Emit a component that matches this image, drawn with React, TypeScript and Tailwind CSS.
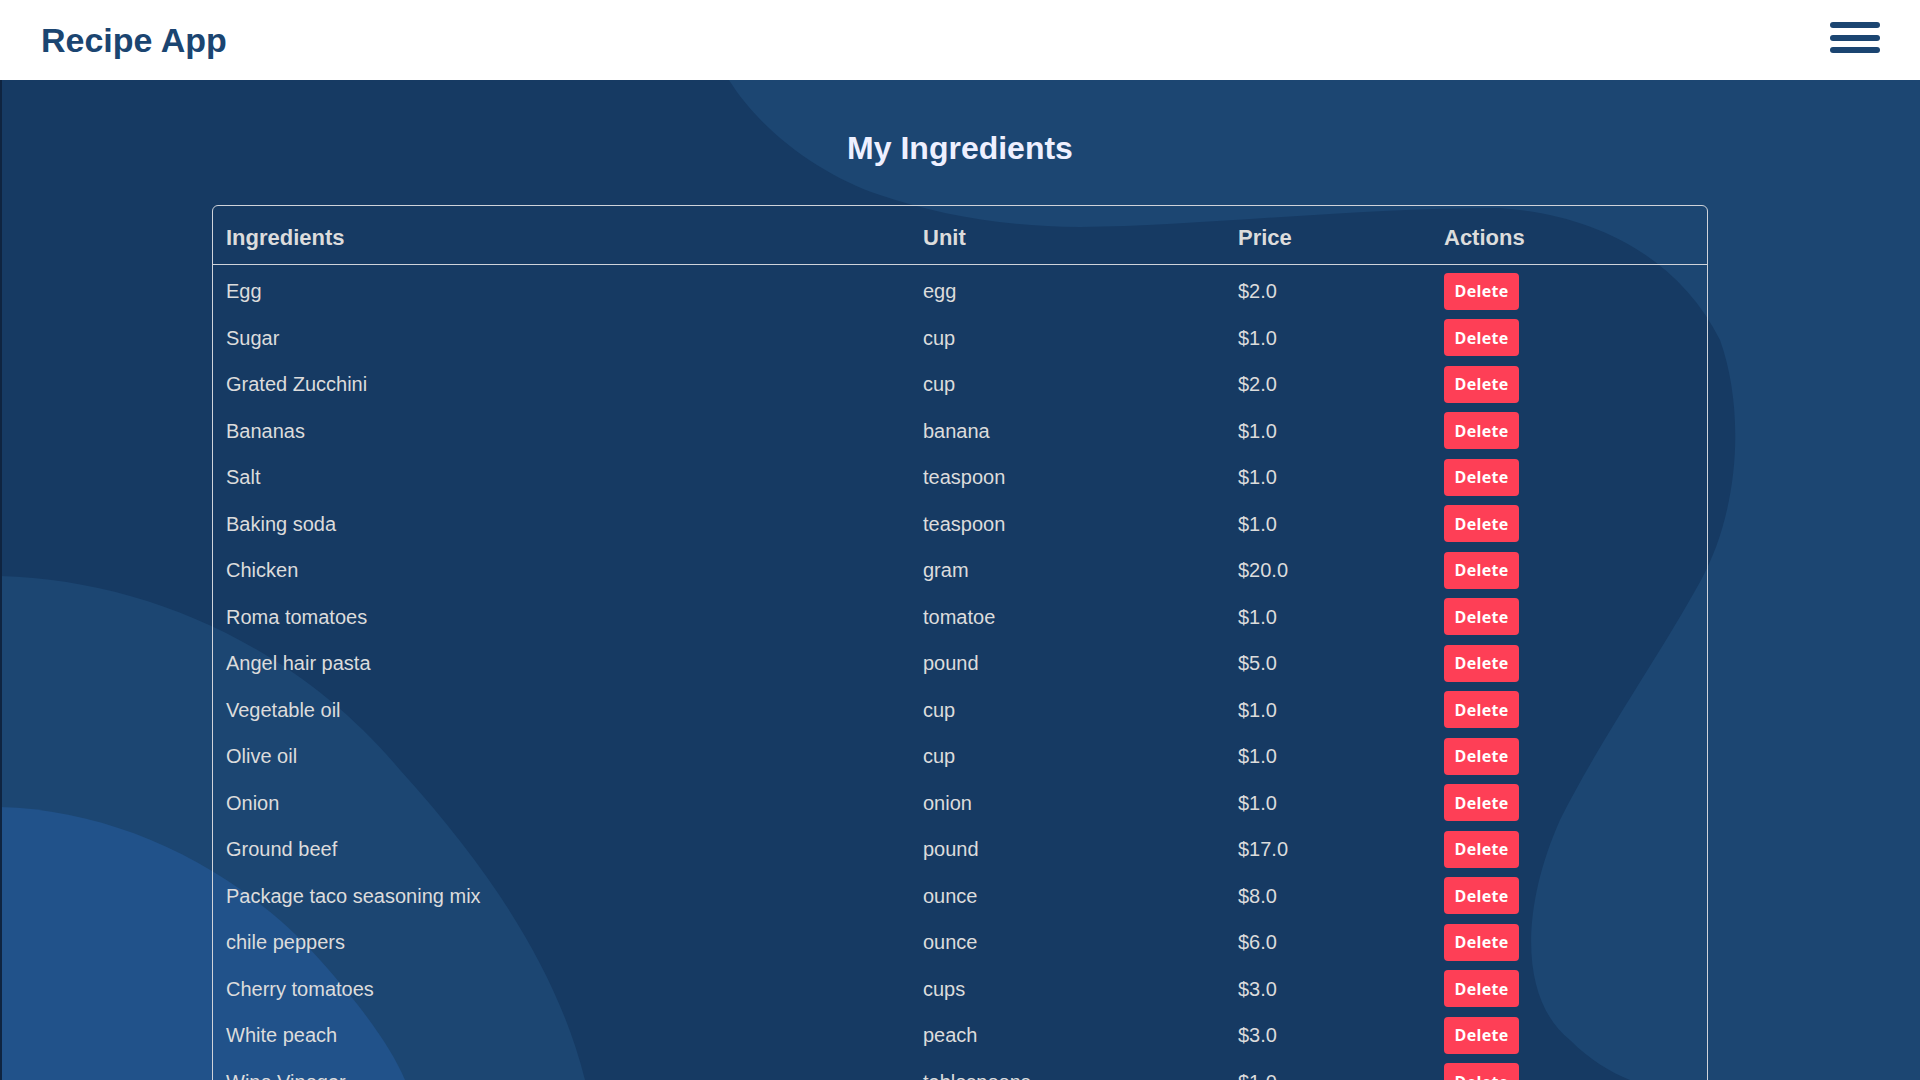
type Ingredient = {
  name: string;
  unit: string;
  price: string;
};

const ingredients: Ingredient[] = [
  { name: 'Egg', unit: 'egg', price: '$2.0' },
  { name: 'Sugar', unit: 'cup', price: '$1.0' },
  { name: 'Grated Zucchini', unit: 'cup', price: '$2.0' },
  { name: 'Bananas', unit: 'banana', price: '$1.0' },
  { name: 'Salt', unit: 'teaspoon', price: '$1.0' },
  { name: 'Baking soda', unit: 'teaspoon', price: '$1.0' },
  { name: 'Chicken', unit: 'gram', price: '$20.0' },
  { name: 'Roma tomatoes', unit: 'tomatoe', price: '$1.0' },
  { name: 'Angel hair pasta', unit: 'pound', price: '$5.0' },
  { name: 'Vegetable oil', unit: 'cup', price: '$1.0' },
  { name: 'Olive oil', unit: 'cup', price: '$1.0' },
  { name: 'Onion', unit: 'onion', price: '$1.0' },
  { name: 'Ground beef', unit: 'pound', price: '$17.0' },
  { name: 'Package taco seasoning mix', unit: 'ounce', price: '$8.0' },
  { name: 'chile peppers', unit: 'ounce', price: '$6.0' },
  { name: 'Cherry tomatoes', unit: 'cups', price: '$3.0' },
  { name: 'White peach', unit: 'peach', price: '$3.0' },
  { name: 'Wine Vinegar', unit: 'tablespoons', price: '$1.0' },
];

function Navbar() {
  return (
    <header className="flex h-[80px] items-center justify-between bg-white pl-[41px] pr-[40px]">
      <h1 className="text-[34px] font-bold leading-none text-[#1b4571]">Recipe App</h1>
      <button className="mb-[5px] flex flex-col gap-[6.5px]" aria-label="menu">
        <span className="block h-[6px] w-[50px] rounded-full bg-[#1b4571]" />
        <span className="block h-[6px] w-[50px] rounded-full bg-[#1b4571]" />
        <span className="block h-[6px] w-[50px] rounded-full bg-[#1b4571]" />
      </button>
    </header>
  );
}

function Waves() {
  return (
    <svg
      className="absolute left-0 top-0 h-[1000px] w-full"
      viewBox="0 0 1920 1000"
      preserveAspectRatio="none"
    >
      <path
        fill="#1c4672"
        d="M729,0 C760,50 820,95 880,115 C940,135 1000,146 1080,147 C1200,146 1350,128 1500,128 C1600,135 1680,180 1720,260 C1745,330 1740,430 1700,502 C1660,575 1600,660 1560,740 C1520,830 1520,920 1570,960 C1590,980 1610,992 1630,1000 L1920,1000 L1920,0 Z"
      />
      <path fill="#1c4672" d="M0,496 C150,500 300,570 400,690 C500,800 560,900 585,1000 L0,1000 Z" />
      <path fill="#21528a" d="M0,727 C120,730 240,790 320,880 C360,925 390,965 405,1000 L0,1000 Z" />
    </svg>
  );
}

export default function App() {
  return (
    <div className="min-h-screen bg-[#163a63] font-['Liberation_Sans',Arial,sans-serif]">
      <Navbar />
      <main className="relative min-h-[1000px] overflow-hidden pb-10">
        <Waves />
        {/* dark edge on the left of the page */}
        <div className="absolute bottom-0 left-0 top-0 w-[2px] bg-[#0f2440]" />
        <div className="relative">
          <h2 className="pt-[50px] text-center text-[32px] font-bold leading-[37px] text-[#eef0ff]">
            My Ingredients
          </h2>
          <div className="mx-auto mt-[38px] w-[1496px] rounded-t-[6px] border border-[#cfd3da]">
            <div className="grid h-[59px] grid-cols-[697px_315px_206px_1fr] items-center border-b border-[#cfd3da] pl-[13px] pt-[4px] text-[22px] font-bold text-[#dcdcdc]">
              <div>Ingredients</div>
              <div>Unit</div>
              <div>Price</div>
              <div>Actions</div>
            </div>
            <div className="pt-[3px]">
              {ingredients.map((item) => (
                <div
                  key={item.name}
                  className="grid h-[46.5px] grid-cols-[697px_315px_206px_1fr] items-center pl-[13px] text-[20px] text-[#dcdcdc]"
                >
                  <div>{item.name}</div>
                  <div>{item.unit}</div>
                  <div>{item.price}</div>
                  <div>
                    <button className="h-[37px] w-[75px] rounded-[4px] bg-[#fe3f56] font-['Open_Sans',sans-serif] text-[16px] font-bold tracking-[0.3px] text-white">
                      Delete
                    </button>
                  </div>
                </div>
              ))}
            </div>
          </div>
        </div>
      </main>
    </div>
  );
}
